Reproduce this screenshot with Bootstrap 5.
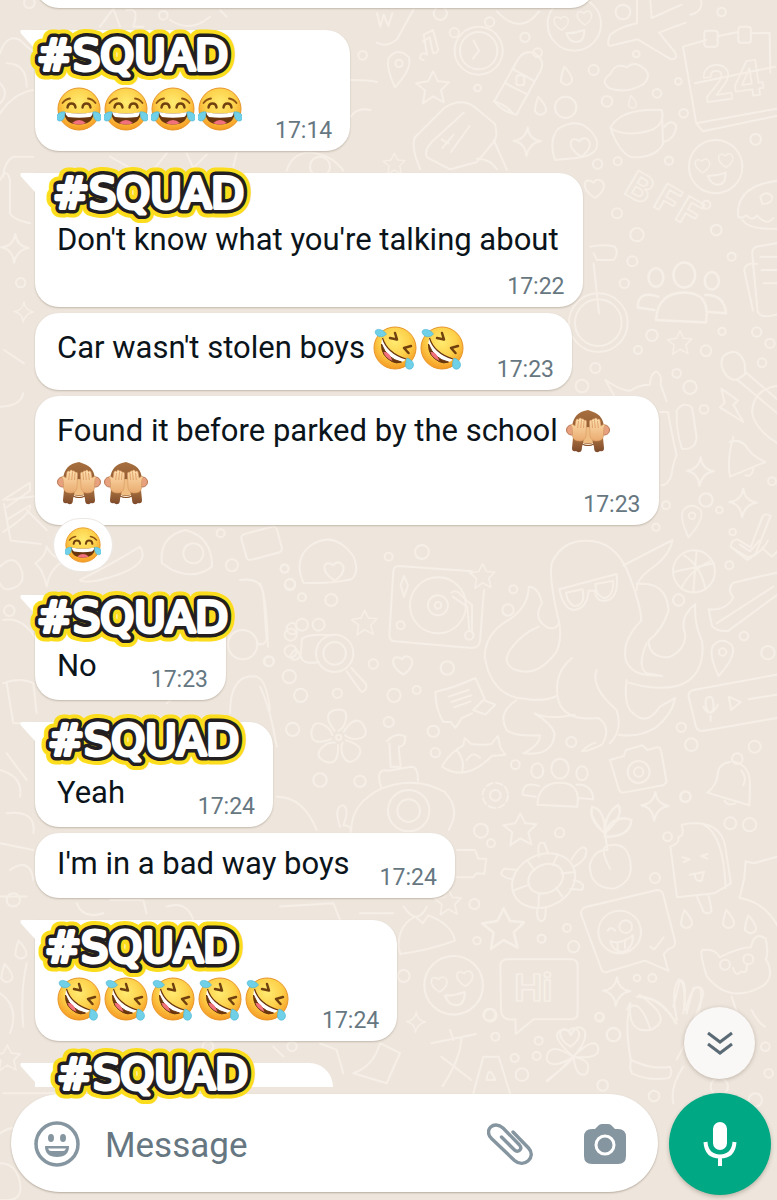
<!DOCTYPE html>
<html lang="en">
<head>
<meta charset="utf-8">
<meta name="viewport" content="width=device-width, initial-scale=1">
<title>Group chat</title>
<link href="https://cdn.jsdelivr.net/npm/bootstrap@5.3.0/dist/css/bootstrap.min.css" rel="stylesheet">
<style>
body{background:#eee6dd;font-family:Roboto,"Noto Sans",sans-serif;color:#0b141a}
.wallpaper{z-index:0;fill:none;stroke:#f6efe7;stroke-width:6;stroke-linecap:round;stroke-linejoin:round}
.wallpaper text{font-family:Inter,sans-serif;font-weight:700;stroke-width:5}
.chat{z-index:2;padding-left:35px;padding-right:35px}
.bubble{background:#fff;border-radius:24px;padding:9px 18px 6px 22px;box-shadow:0 1px 2px rgba(80,60,40,.28);margin-bottom:6px;max-width:100%}
.bubble.tailed{border-top-left-radius:0}
.group-end{margin-bottom:22px}
.has-reaction{margin-bottom:70px}
.bubble-past{width:560px;height:60px;margin-top:-52px}
.bubble-next{width:298px;height:24px;border-radius:0 24px 0 0;margin-bottom:7px;box-shadow:none}
.tail{left:-15px;top:0;width:18px;height:22px;fill:#fff}
.sender{height:42px}
.sender-tight{height:36px}
.sender-short{height:40px;min-width:151px}
.sender-long{height:40px;min-width:198px}
.words{font-size:31px;line-height:40px;padding-top:2px;margin-bottom:8px}
.words-emoji{line-height:52px;padding-top:0;margin-bottom:10px}
.sender+.beside{padding-top:2px}
.words-above{padding-right:6px;margin-bottom:12px}
.stamp{font-size:23px;line-height:29px;color:#667781}
.beside{column-gap:33px}
.beside-plain{column-gap:30px}
.overlap{display:grid}
.overlap>*{grid-area:1/1}
.overlap .words{padding-right:31px}
.emoji{width:44px;height:44px;margin-right:3px;vertical-align:middle;margin-top:-4px}
.emoji:last-child{margin-right:0}
.reaction{left:18px;bottom:-47px;width:60px;height:54px;border-radius:27px;background:#fff;border:1px solid #ece7e2}
.reaction .emoji{width:36px;height:36px;margin:0}
.sticker{width:206px;height:52px;left:var(--x);top:var(--y);overflow:visible;stroke-linejoin:round;stroke-linecap:round}
.sticker text,#squad{font-family:"DejaVu Sans",sans-serif;font-size:43px}
.composer{z-index:1;padding:0 6px 8px 11px;gap:11px}
.entry{height:98px;border-radius:49px;background:#fff;box-shadow:0 1px 2px rgba(80,60,40,.35);padding:2px 31px 0 22px}
.entry input{font-size:35px;color:#0b141a;padding:4px 0 0 24px;line-height:48px}
.entry input::placeholder{color:#667781;opacity:1}
.entry button{color:#8696a0}
.mic{width:102px;height:102px;margin:-1px 0 -3px;background:#00a884;box-shadow:0 2px 4px rgba(80,60,40,.3)}
.jump{width:71px;height:72px;right:22px;bottom:121px;background:#faf8f7;color:#5b6b75;box-shadow:0 1px 4px rgba(80,60,40,.3);z-index:3}
</style>
<script src="https://cdn.jsdelivr.net/npm/bootstrap@5.3.0/dist/js/bootstrap.bundle.min.js"></script>
</head>
<body>
<svg width="0" height="0" class="position-absolute" aria-hidden="true">
<defs>
<radialGradient id="skin" cx=".5" cy=".35" r=".65"><stop offset="0" stop-color="#ffeb70"/><stop offset=".55" stop-color="#fdd04a"/><stop offset="1" stop-color="#f59a23"/></radialGradient>
<linearGradient id="fur" x2="0" y2="1"><stop offset="0" stop-color="#a8703f"/><stop offset="1" stop-color="#7d492a"/></linearGradient>
<linearGradient id="hand" x2="0" y2="1"><stop offset="0" stop-color="#ffe0b0"/><stop offset="1" stop-color="#e9ab70"/></linearGradient>
<symbol id="joy" viewBox="0 0 44 44">
<circle cx="22" cy="22" r="21" fill="url(#skin)" stroke="#e89528"/>
<path d="M5.500 16q3-4 7.500-4.500M38.500 16q-3-4-7.500-4.500" fill="none" stroke="#8a5213" stroke-width="1.800" stroke-linecap="round"/>
<path d="M10.500 20.500q.5-4 4-4t4 4M25.500 20.500q.5-4 4-4t4 4" fill="none" stroke="#70410f" stroke-width="2.400" stroke-linecap="round"/>
<path d="M7 25q15 3 30 0-1 12.500-15 12.500T7 25z" fill="#69350e"/>
<path d="M8 25q14 3 28 0-1 4.500-3 5-11 1.500-22 0-2-1-3-5z" fill="#fff"/>
<path d="M15 36q7-6 14 0-7 3-14 0z" fill="#f0707c"/>
<path d="M8 25c-4-1-9 2-8.500 6 .5 4 6 4 7.500 0 .8-2 1-4 1-6zM36 25c4-1 9 2 8.500 6-.5 4-6 4-7.500 0-.8-2-1-4-1-6z" fill="#6fd0e8" stroke="#48b4d4" stroke-width=".6"/>
</symbol>
<symbol id="rofl" viewBox="0 0 44 44">
<circle cx="22" cy="22" r="21" fill="url(#skin)" stroke="#e89528"/>
<path d="M22 7l2 6.500-7-1.500M38 20l-7 2 4.500 5" fill="none" stroke="#70410f" stroke-width="2.500" stroke-linecap="round" stroke-linejoin="round"/>
<path d="M9.500 12Q14 27 33 33q-2 3-4.500 3Q14 33 8.500 18q0-4 1-6z" fill="#fff"/>
<path d="M8.500 18Q14 33 28.500 36q-5 2-9.500-.5Q8 30 8.500 18z" fill="#69350e" stroke="#69350e"/>
<path d="M10.500 26q6-1 9 9Q12 32 10.500 26z" fill="#f0707c"/>
<path d="M9.500 12Q14 27 33 33" fill="none" stroke="#69350e" stroke-width="1.200"/>
<path d="M2 6c1-5 9-2 11.500 2-3 4-10 4-11.500-2z" fill="#6fd0e8" stroke="#48b4d4" stroke-width=".6"/>
<path d="M34 32c4 1 8 5 6 9s-8 2-7.500-2c.2-3 .5-5 1.500-7z" fill="#6fd0e8" stroke="#48b4d4" stroke-width=".6"/>
</symbol>
<symbol id="monkey" viewBox="0 0 44 44">
<circle cx="5.500" cy="21" r="5" fill="#e7a17e" stroke="#b87550"/><circle cx="38.500" cy="21" r="5" fill="#e7a17e" stroke="#b87550"/>
<path d="M22 1l4 1.500C35 5 38 12 38 20q0 9-5 13-11 7-22 0-5-4-5-13C6 11 10 4 18 2z" fill="url(#fur)"/>
<ellipse cx="22" cy="27" rx="10" ry="9" fill="#f0bd83"/>
<path d="M14 32q8 5 16 0-1 5-8 5t-8-5z" fill="#84491f"/><path d="M15 33q7 4 14 0-2 3-7 3t-7-3z" fill="#fff0d8"/>
<path d="M7 29h11l-2 9q0 5-2.500 5-2 .5-3.500-1-4 1-4-3zM37 29H26l2 9q0 5 2.500 5 2 .5 3.500-1 4 1 4-3z" fill="url(#fur)"/>
<path d="M6 18q-2-2 0-3l3 2 1-6q1.500-2 2.500 0l.5-1.500q2-1.500 2.500.8 2-1.500 2.500 1 2.500-1 2.500 1.700l-.5 14q-1 5-6 5-7 0-7.500-5z" fill="url(#hand)" stroke="#d89b62" stroke-width=".6"/>
<path d="M38 18q2-2 0-3l-3 2-1-6q-1.500-2-2.500 0l-.5-1.500q-2-1.500-2.500.8-2-1.500-2.500 1-2.500-1-2.500 1.700l.5 14q1 5 6 5 7 0 7.500-5z" fill="url(#hand)" stroke="#d89b62" stroke-width=".6"/>
<path d="M12.500 12l-.8 7M15.500 11l-.8 8M18 12l-.5 7M31.500 12l.8 7M28.500 11l.8 8M26 12l.5 7" stroke="#d8995f" stroke-width=".8"/>
</symbol>
<symbol id="tail" viewBox="0 0 18 22"><path d="M2 0h16v22h-3V19L1 3.500Q-.5 0 2 0z"/></symbol>
<text id="squad" x="6" y="40">#SQUAD</text>
<path id="star" d="M0-16l5 10 11 1-8 8 3 12-11-6-10 7 2-13-9-7 12-2z" stroke-width="2"/>
<path id="spark" d="M0-42q4 36 40 42Q6 4-4 44-6 6-42-2-6-6 0-42z"/>
<path id="heart" d="M0 30C-50 0-30-38-4-16 12-42 54-6 0 30z"/>
<path id="drop" d="M-6-28Q26 8 14 20-2 34-16 16-16 0-6-28z"/>
<g id="love"><circle r="80"/><use href="#heart" transform="translate(-38 -4) scale(.75)"/><use href="#heart" transform="translate(32 -20) scale(.75)"/><path d="M-24 28q28 0 54-10 0 36-24 36-20 0-30-26z"/></g>
<g id="bell"><path d="M-20-56q-30 4-36 30Q-58 14-88 36L38 74Q40 40 40 10 40-46-6-56M-36 60q8 18 32 8"/><circle cx="2" cy="-66" r="16"/><path d="M14-30q18 20 6 44"/></g>
<g id="people"><ellipse cy="-60" rx="26" ry="30"/><path d="M-68 48Q-64-18 0-18T52 54zM-62-8q-50-16-50 26l40 6M50-12q46-2 50 44l-46-4"/><ellipse cx="-68" cy="-54" rx="18" ry="22"/><ellipse cx="66" cy="-46" rx="17" ry="21"/></g>
<g id="pin"><path d="M-14 58Q-46-10-30-34-4-62 26-34 42-4-14 58z"/><circle cx="-2" cy="-14" r="11"/></g>
</defs>
</svg>

<main class="position-relative d-flex flex-column min-vh-100 overflow-hidden">
<svg class="wallpaper position-absolute top-0 start-0 w-100 h-100" viewBox="0 0 777 1200" preserveAspectRatio="xMinYMin slice" aria-hidden="true">
<!-- upper right -->
<g transform="translate(377 0) scale(.3333)">
<path d="M0 40l10 40L20 44l14 34L46 40M110 28L60 118q-30 26-60 10M360 34q70 76 126 0M140 180q-16 0-8-16 10-8 18 0l-10-60 28-14 16 60q-14 20-18 0l-8-38-20 12"/>
<circle cx="305" cy="152" r="72"/><circle cx="305" cy="152" r="56"/><path d="M290 122l16 30-18 24"/><circle cx="232" cy="98" r="14"/><circle cx="338" cy="66" r="14"/>
<use href="#pin" x="68" y="204"/><use href="#star" transform="translate(168 262) scale(3)"/><use href="#star" transform="translate(52 492) scale(2)"/>
<path d="M352 304l72-128q20-28 50-16 30 20 18 50l-74 134q-40-8-66-40zM386 250l66 34M406 206l64 36M350 304q30 6 58 36"/><circle cx="482" cy="158" r="13"/><rect x="418" y="226" width="24" height="30" rx="8"/>
<use href="#love" x="592" y="72"/><use href="#love" x="1016" y="500"/>
<use href="#drop" x="568" y="228"/><use href="#drop" x="490" y="318"/><use href="#drop" x="766" y="306" transform="translate(230 92) scale(.7)"/>
<path d="M780 0v70q-50 10-80 34-16 40 6 32l76-18 100 60q24 0 10-24l-46-56 80-30M820 0l4 54 90-40M940 44q40-10 32-44M700 266q-34-20 0-44 16-36 50-20 20-20 46 0 32 20 4 50-50 30-100 14z"/>
<path d="M700 384q30-60 154-54 12 40-30 60-80 24-124-6zM700 384q30 80 66 88 70 2 92-40l-2-70M862 380q20-24 36-4-2 40-38 50"/>
<path d="M130 508q-30-70-16-96l90-90q50-30 90 0l60 50q10 40-4 54l-50 60-80 22-70-36q-10-20 14-46l96-88M350 420l40 90M196 444l34-40M222 456l56-78M214 430l-20-12M300 476q40 0 60 32"/>
<circle cx="566" cy="322" r="32"/><path d="M534 480q-20-60 10-94 70-44 114 30 16 50-60 58z"/><use href="#heart" x="612" y="440"/><use href="#spark" x="452" y="424"/>
<path d="M918 140l70-20M1024 108l60-12M1128 100l50-2 2 120M918 140l40 230 240-44M958 370l20 24 220-46M954 250l240-50"/><rect x="982" y="92" width="40" height="48" rx="8"/><rect x="1084" y="80" width="38" height="48" rx="8"/>
<text x="975" y="296" font-size="145" transform="rotate(-8 1060 240)">24</text>
<g font-size="112" transform="rotate(30 800 580)"><text x="745" y="610">B</text><text x="840" y="600">F</text><text x="915" y="600">F</text></g>
<use href="#heart" x="654" y="564"/>
<path d="M1084 650q-10-90 116-108M1084 650q10 8 24-4 20 20 32 0 30 34 50 8M1096 660q20 30 104 26M1150 590q20-20 36 0 0 22-30 22z"/>
<path d="M640 740q40-8 74 0 12 20-4 40h-50l-10-20M650 790l16 150"/><circle cx="664" cy="968" r="88"/><circle cx="664" cy="968" r="70"/>
<use href="#people" transform="translate(922 900) scale(1.250)"/><path d="M1198 730l-60 10q-14 6-12 24l16 170q10 24 56 10M1150 770h50M1154 810h46M1160 850h40M1140 792q-36-6-38 20l26 120"/>
<circle cx="190" cy="40" r="20"/><circle cx="444" cy="112" r="14"/><circle cx="738" cy="36" r="22"/><circle cx="1034" cy="36" r="13"/><circle cx="650" cy="210" r="15"/><circle cx="690" cy="304" r="16"/><circle cx="840" cy="280" r="13"/><circle cx="920" cy="340" r="13"/><circle cx="662" cy="492" r="14"/><circle cx="722" cy="484" r="12"/><circle cx="876" cy="482" r="12"/><circle cx="1136" cy="418" r="16"/><circle cx="720" cy="640" r="15"/><circle cx="780" cy="704" r="20"/><circle cx="988" cy="614" r="12"/><circle cx="1018" cy="690" r="16"/><circle cx="766" cy="784" r="15"/><circle cx="742" cy="850" r="14"/><circle cx="302" cy="264" r="10"/><circle cx="778" cy="162" r="10"/><circle cx="904" cy="244" r="10"/><circle cx="1064" cy="770" r="12"/>
</g>
<!-- middle right -->
<g transform="translate(560 280) scale(.3333)">
<use href="#star" transform="translate(360 188) scale(2.200)"/>
<path d="M486 262q-8-38 28-46 26-4 40 34l2 32-26 18q-30 0-44-38zM530 298l120 100M556 276l94 80M650 318q-70 10-74 80 10 50 74 90M484 326l50 36-14 12 30 52-70-44 14-14z"/>
<path d="M136 300q60 40 80 30 20-16 54-16 0-30 18-40 20 10 14 40l18 50M136 300l26 46M300 396h24q10 60 26 130-10 20-16 60-10 30-30 30M350 392q20-30 46-10l14 90q-4 40-44 34-18-50-16-114z"/>
<path d="M520 470q-20 70-10 120l106-44q-40-16-60-50-20-20-46-10M556 586q20 6 24-20"/><use href="#spark" x="422" y="574"/><use href="#spark" x="550" y="668"/><use href="#pin" transform="translate(398 720) scale(.900)"/>
<path d="M512 800l50 40 24-16 46-116q-20-12-26 6l-34 88-40-24q-20 4-20 22M606 804l30 26 20-20"/>
<circle cx="106" cy="264" r="15"/><circle cx="66" cy="318" r="19"/><circle cx="276" cy="166" r="17"/><circle cx="234" cy="210" r="12"/><circle cx="350" cy="280" r="13"/><circle cx="390" cy="322" r="20"/><circle cx="438" cy="212" r="16"/><circle cx="486" cy="154" r="11"/><circle cx="590" cy="156" r="14"/><circle cx="630" cy="190" r="14"/><circle cx="606" cy="248" r="13"/><circle cx="432" cy="388" r="13"/><circle cx="438" cy="660" r="20"/><circle cx="318" cy="676" r="12"/><circle cx="288" cy="742" r="11"/><circle cx="478" cy="690" r="10"/><circle cx="636" cy="604" r="12"/><circle cx="518" cy="756" r="10"/><circle cx="508" cy="856" r="12"/>
</g>
<!-- octopus, turntable and neighbours -->
<g transform="translate(260 540) scale(.3333)">
<path d="M130 128q-30-70 20-110 70-50 130 30 20 50-6 70-60 14-144 10z"/><use href="#heart" x="224" y="92"/>
<path d="M416 78q-14 0-16 16l-12 190q0 18 16 20l230 20q22 0 26-20l12-154M416 78l220 16"/><circle cx="534" cy="196" r="84"/><circle cx="534" cy="196" r="30"/><circle cx="534" cy="196" r="10"/><use href="#star" transform="translate(668 108) scale(2.300)"/><path d="M574 158q10-8 22 0l40 38v80M578 170l44 30 6 70M432 108l12 28-12 34-10-34z"/><circle cx="628" cy="286" r="13"/><circle cx="422" cy="256" r="12"/>
<path d="M898 250Q860 90 880 60 910 0 982 2q80 0 120 90 40 100 42 150-60 60-46 120 20 50 100 44M898 250q10 70-20 100-50 60-110 40-50-20-10-70 30-40 78-60M806 140q30 0 40 50-30 50 20 74 24 4 30-14M806 140q0 60-60 100-70 40-72 110 20 120 120 126 60 10 96-8M936 354q-60 50-40 130 20 60 120 50 40 30 10 80-40 20-60 20 20-20 40-26M1010 390q-20 50 60 120 20 60-20 100M770 480q-60 40-30 90 20 20 100 16 0 30-50 54 90 10 94-60-10-30-60-60 40 20 120 4M1100 420q-10 80 20 100 40 40 80-20l46-26q-10 50-60 90-50 30-110 20M1130 132q90-10 96 80-20 60-60 90 0 50 60 50 50-20 50-70-20-50 30-90-4 60 20 110 10 80-40 120-60 40-180 6M1160 310q-30 70 0 90l46 8M1090 76l148-76q-10 50-70 90-40 30-38 60"/>
<path d="M898 148l172-46q6 60-20 76-40 16-46-26h-18q-4 54-44 58-30 0-44-62zM918 158l50-10q10 50-26 50-20-10-24-40zM1006 132l54-10q0 50-28 52-24-6-26-42z"/>
<circle cx="1302" cy="94" r="63"/><path d="M1240 96l122-26M1272 46q50 30 64 100M1264 146q20-50 86-82M1310 32l-10 124"/>
<path d="M1550 98l-130 30q-20 20 0 44-20 40-74 36l10 50q20 20 50 14l144-106M1370 250l170-110M1414 22l50 30q40-10 60-50M1440 14l30 20 30-34"/>
<use href="#pin" transform="translate(1390 350)"/><path d="M1550 404l-250 46q-16 4-14 20l22 90q6 16 24 12l218-38M1338 476q20-16 22 14 4 30-14 26-12-14-8-40zM1330 500q20 40 44-6M1352 528v14M1406 470l36 16-28 24zM1466 478l84-14"/>
<circle cx="92" cy="284" r="18"/><circle cx="92" cy="334" r="18"/><circle cx="126" cy="254" r="18"/><circle cx="176" cy="254" r="18"/><path d="M176 366q-50 10-54-20l4-50q20-16 90-10"/><circle cx="224" cy="340" r="56"/><circle cx="224" cy="340" r="34"/><path d="M260 394l44 62q20-6 14-24l-44-48"/><use href="#star" transform="translate(314 248) scale(2.300)"/><use href="#heart" x="430" y="374"/>
<path d="M526 456q60-14 120-42l28 62M526 456q0 50 24 90l22 0 14 18 20-30 30-14M566 470l60-20M574 486l60-20M582 502l50-18M640 510l30-30 36 14-30 30z"/>
<g transform="translate(236 592)"><path id="petal" d="M-12-20q-40-50 0-62 40-8 34 28-4 24-22 34"/><use href="#petal" transform="rotate(72)"/><use href="#petal" transform="rotate(144)"/><use href="#petal" transform="rotate(216)"/><use href="#petal" transform="rotate(288)"/><circle r="8"/></g>
<path d="M546 680q20-40 64-64l4-22 20 18q40 4 60 0l20-24 8 36 14 20-40 4q-80 80-150 32zM590 630q26 30 16 66M620 660q20-30 40-6"/>
<path d="M380 604q30-30 56-14 0 30-20 30l6 60h-30l-4-70M364 744q-20-60 20-52l70-12q20 0 20 42M274 870q0-80 90-124 100-40 190 10 50 50 12 114"/><circle cx="446" cy="812" r="62"/><circle cx="446" cy="812" r="34"/><circle cx="706" cy="766" r="16"/><circle cx="706" cy="766" r="38" stroke-dasharray="20 10"/>
<use href="#people" x="900" y="746"/><path d="M1050 660l42-12 6-18 50-14 14 14 30-8q10 0 12 14l16 90-10 10-120 22q-10 0-14-12z"/><circle cx="1136" cy="696" r="33"/><circle cx="1136" cy="696" r="14"/><use href="#bell" x="1430" y="722"/><use href="#spark" x="1186" y="798"/><path d="M1034 880q-50-40-38-80 40 10 38 80 0-60 40-84 20 30-40 84 40-60 80-40 0 50-80 50z"/>
<path d="M0 440q30 60 50 180M0 130q20 40 24 190M50 770q80 0 120 100M240 860q-20-60 10-64 20 10 0 60 30 0 20 30"/>
<circle cx="486" cy="36" r="21"/><circle cx="386" cy="50" r="12"/><circle cx="74" cy="86" r="12"/><circle cx="90" cy="134" r="16"/><circle cx="214" cy="180" r="18"/><circle cx="126" cy="172" r="12"/><circle cx="340" cy="372" r="14"/><circle cx="562" cy="384" r="20"/><circle cx="402" cy="466" r="20"/><circle cx="122" cy="466" r="20"/><circle cx="232" cy="460" r="14"/><circle cx="98" cy="568" r="20"/><circle cx="386" cy="546" r="15"/><circle cx="520" cy="574" r="17"/><circle cx="526" cy="638" r="14"/><circle cx="180" cy="720" r="20"/><circle cx="300" cy="724" r="17"/><circle cx="744" cy="210" r="17"/><circle cx="1256" cy="180" r="17"/><circle cx="934" cy="606" r="15"/><circle cx="1294" cy="614" r="19"/><circle cx="1484" cy="620" r="18"/><circle cx="1264" cy="562" r="14"/><circle cx="1276" cy="770" r="16"/><circle cx="1524" cy="338" r="20"/><circle cx="1452" cy="288" r="13"/><circle cx="760" cy="148" r="12"/><circle cx="766" cy="674" r="13"/><circle cx="28" cy="364" r="14"/><circle cx="470" cy="450" r="12"/>
</g>
<!-- lower right -->
<g transform="translate(377 780) scale(.3333)">
<use href="#star" transform="translate(430 148) scale(3)"/><use href="#star" transform="translate(380 446) scale(3.800)"/><use href="#star" transform="translate(214 366) scale(2.400)"/>
<ellipse cx="506" cy="296" rx="54" ry="42" transform="rotate(-25 506 296)"/><ellipse cx="500" cy="302" rx="98" ry="78" transform="rotate(-25 500 302)"/><path d="M406 298q-50-10-24-32l38 4M486 230q-8-50 16-40l12 30M584 238q30-50 44-30 4 30-34 50M590 300q40 10 24 30l-34-4M506 384q2 40-14 40-16-10-10-40M542 224l-14 30M594 276l-40 4M556 350l-18-26M484 384l2-42M414 330l36-14M450 240l22 30"/>
<path d="M700 266q-40-70 0-70 50-10 60 50 10 60-50 80-70 0-72-70 14-50 54-46-10-50-8-90M684 160q-50-50-38-80 40 10 38 80 0-60 40-86 20 30-40 86 20-60 80-40-10 50-70 50"/>
<path d="M880 200q30-10 24-30 20 0 10-36 110-20 130 60l18 116-50 30-112 12q-10-80-20-152zM980 134q60 30 66 190M960 350l20 46q20 10 24-6l-10-46M916 232l22 6-18 8M992 222l-20 6 20 8M938 284l44-8M954 286q2 20 20 16l6-24"/>
<path d="M630 380l210-50q14 0 18 12l36 140q4 20-18 24l-16 16 14 50-70-30-114 34q-14 4-18-12L612 402q-2-16 18-22z"/><circle cx="728" cy="456" r="64"/><circle cx="746" cy="440" r="19"/><path d="M692 452q10-16 22 0M700 484q36 10 68-18 0 40-30 50-30 0-38-32zM722 488v22M744 480v24M820 500l12 8 28-36"/>
<path d="M64 500l6 22q90-12 164-40-10-50-80-76l-16 24-22-20q-50 20-52 90z"/><use href="#love" transform="translate(230 616) scale(1.100)"/>
<path d="M392 538h190q20 0 20 20v140q0 20-20 20H470l-54 44v-44q-44 6-44-30l-2-130q0-20 22-20z"/><text x="412" y="664" font-size="112">Hi</text>
<use href="#spark" x="720" y="634"/><use href="#spark" transform="translate(118 726) scale(.7)"/>
<path d="M990 590q-30-90-6-80 30-4 44 22 60-30 94-30 10-50 44-26 10 50 0 60 30 50-6 80-100 60-170-26zM1068 564q10 30 24 10 20 10 18-20"/><circle cx="1044" cy="554" r="15"/><circle cx="1114" cy="538" r="15"/>
<path d="M1200 230l-70 20-24-6-4 50-14 60q70 10 112 80M1064 650q20 60 30 90M1124 690q20 40 40 50M750 690l10-20q-10 90 60 80 50-20 20-60-60-60-54-40 70 0 110 80M900 720q-20-90 6-122 20 10 16 80M926 690q20-80 44-66 10 50-20 110M80 380q40 60 70 0M240 210h54l10 26 24 0-6 46-24-2-10 12h-50"/>
<use href="#drop" x="928" y="418"/><use href="#drop" x="1054" y="418"/><use href="#drop" x="1120" y="434"/><use href="#heart" x="580" y="770"/>
<circle cx="312" cy="152" r="21"/><circle cx="548" cy="158" r="14"/><circle cx="926" cy="50" r="15"/><circle cx="1060" cy="130" r="18"/><circle cx="1118" cy="134" r="20"/><circle cx="872" cy="170" r="13"/><circle cx="834" cy="294" r="15"/><circle cx="292" cy="372" r="15"/><circle cx="590" cy="500" r="17"/><circle cx="494" cy="476" r="12"/><circle cx="570" cy="444" r="12"/><circle cx="80" cy="588" r="18"/><circle cx="340" cy="706" r="19"/><circle cx="668" cy="712" r="13"/><circle cx="710" cy="764" r="20"/><circle cx="826" cy="594" r="12"/><circle cx="342" cy="190" r="12"/><circle cx="300" cy="482" r="11"/><circle cx="780" cy="594" r="10"/>
</g>
<!-- above the message box -->
<g transform="translate(420 960) scale(.3333)">
<path d="M34 250l134-28M90 210l10 30M124 232q0 60-56 146M64 290l90 70M160 400l30-110h46l34 110M200 360q6-50 26 0z"/>
<path d="M460 290q-70-60-40-78 26-10 32 14 20-40 42-14 10 30-34 78 60-60 74-30 10 40-74 30 60 10 40 50-30 20-40-50-90 90-78 70 80-60 78-70-60 40-80 10 0-60 80-10z"/>
<path d="M632 300q-20-120 0-160 30-20 60 70M650 110q70 0 120 80M760 140l20-80q24 0 10 100M800 160l20-76q30-10 30 20l-50 140-30 54M634 300q60 30 116 20 10 20-4 34-60 10-110-14-10-20-2-40zM790 320q-40 60-30 110"/>
<circle cx="208" cy="164" r="18"/><circle cx="226" cy="230" r="12"/><circle cx="356" cy="242" r="12"/><circle cx="350" cy="288" r="12"/><circle cx="284" cy="294" r="12"/><circle cx="306" cy="344" r="19"/><circle cx="580" cy="224" r="20"/><circle cx="538" cy="170" r="12"/><circle cx="548" cy="376" r="16"/><circle cx="702" cy="408" r="16"/><circle cx="898" cy="380" r="26"/><circle cx="1036" cy="260" r="13"/><circle cx="1006" cy="420" r="20"/><circle cx="1046" cy="340" r="13"/>
</g>
<!-- left edge and the gaps between messages -->
<g transform="scale(.3333)">
<circle cx="88" cy="8" r="16"/><circle cx="490" cy="46" r="13"/><path d="M300 80l40-54 20 54M380 30q40-10 20 50h30M510 60q60 40 120-10M660 30l20 20M0 160q20-60 60-40 60 60 100 60M20 190q60 0 60 70"/><path d="M0 540q20-40 30 0v100q10 20 60 30M0 250q30 30 0 60M0 340q40-60 100-70M100 470l-60 0q-30 20-30 60"/><use href="#spark" x="46" y="744"/><circle cx="62" cy="848" r="14"/><use href="#spark" transform="translate(72 936) scale(.7)"/><circle cx="1088" cy="166" r="13"/><path d="M1052 240q60 0 80 6M1052 350q20-30 60-20M330 470l60 34M460 510l40-50M560 460l20 44 40-40M700 500l10-40M860 512q20-60 80-54 60 10 90 54"/><circle cx="960" cy="500" r="30"/>
<path d="M12 1050l60 40M0 1220q60 0 70-40M20 1560l70-44q10 20-80 80M10 1500l80-52v24l-70 50"/>
<path d="M20 1500l150-20M12 1512l20 110 90 10M80 1530l60 60M0 1700q40-40 60 0 20 40-10 60-40 20-50-10M106 1690q30-20 34-50 20 40 60 40-50 20-60 80-10-50-34-70zM240 1740q100-50 180-100 40 60-120 100-50 10-60-0M486 1690q-10-80 70-100 80 20 80 110-50 40-120 10z"/><circle cx="580" cy="1660" r="30"/><rect x="730" y="1590" width="110" height="80" rx="12" transform="rotate(-15 785 1630)"/><circle cx="696" cy="1696" r="18"/><circle cx="870" cy="1752" r="15"/><circle cx="854" cy="1706" r="12"/><circle cx="662" cy="1600" r="12"/><circle cx="28" cy="1832" r="16"/><path d="M10 1860q60-10 100 60M720 1740q60-10 70 40l10 140q-10 20-30 10M10 2050q50-20 90 0l10 90M20 2050l20 120h50M500 2110q30-30 70-10M690 2140q0-120 80-110 30 10 40 100"/><circle cx="728" cy="1934" r="44"/><circle cx="806" cy="1984" r="15"/><circle cx="868" cy="2030" r="20"/><path d="M860 1880q30-30 30 20-30 10-30-20zM870 1970q20-40 30 0-16 20-30 0zM20 2260l60 80M0 2310q70 20 60 80M20 2440q90-10 80 60M0 2530l100 20M30 2610q60-40 70 30M0 2690h80"/>
<use href="#drop" x="62" y="2850"/><use href="#drop" x="20" y="2920"/><use href="#star" transform="translate(22 3174) scale(2.400)"/><path d="M0 2980q60 40 30 120M80 2890q-20 90-10 190M0 3400q60-40 100 20M10 3280h200l-30 60M0 3490q50 0 60 60t-60 50"/><circle cx="40" cy="2700" r="20"/><path d="M230 2710q20 50 80 30M330 2700h100l10 40M500 2720q60-20 80 40M840 2720l160-10 20 50M1080 2740h100"/>
<path d="M440 3150l80 30 30-30M820 3140l30 30M960 3130l50 20 20 70M1060 3220q60-20 80-90l60 30-40 90z"/><circle cx="876" cy="3140" r="14"/><circle cx="624" cy="3140" r="16"/>
</g>
</svg>

<section class="chat position-relative d-flex flex-column align-items-start" aria-label="Messages">
<div class="bubble bubble-past group-end"></div>

<article class="bubble tailed position-relative group-end">
<svg class="tail position-absolute"><use href="#tail"/></svg>
<div class="sender"></div>
<div class="beside d-flex align-items-end"><p class="words words-emoji text-nowrap"><svg class="emoji" role="img" aria-label="😂"><use href="#joy"/></svg><svg class="emoji" role="img" aria-label="😂"><use href="#joy"/></svg><svg class="emoji" role="img" aria-label="😂"><use href="#joy"/></svg><svg class="emoji" role="img" aria-label="😂"><use href="#joy"/></svg></p><time class="stamp">17:14</time></div>
<svg class="sticker position-absolute" style="--x:-4px;--y:0px" viewBox="0 0 206 52"><use href="#squad" fill="#fbdd1e" stroke="#fbdd1e" stroke-width="19"/><use href="#squad" fill="#231f20" stroke="#231f20" stroke-width="11"/><text x="6" y="40" fill="#fff" stroke="#fff" stroke-width="4">#SQUAD</text></svg>
</article>

<article class="bubble tailed position-relative">
<svg class="tail position-absolute"><use href="#tail"/></svg>
<div class="sender sender-tight"></div>
<div class="d-flex flex-column"><p class="words words-above">Don't know what you're talking about</p><time class="stamp align-self-end">17:22</time></div>
<svg class="sticker position-absolute" style="--x:12px;--y:-5px" viewBox="0 0 206 52"><use href="#squad" fill="#fbdd1e" stroke="#fbdd1e" stroke-width="19"/><use href="#squad" fill="#231f20" stroke="#231f20" stroke-width="11"/><text x="6" y="40" fill="#fff" stroke="#fff" stroke-width="4">#SQUAD</text></svg>
</article>

<article class="bubble">
<div class="beside d-flex align-items-end"><p class="words words-emoji">Car wasn't stolen boys <svg class="emoji" role="img" aria-label="🤣"><use href="#rofl"/></svg><svg class="emoji" role="img" aria-label="🤣"><use href="#rofl"/></svg></p><time class="stamp">17:23</time></div>
</article>

<article class="bubble position-relative has-reaction">
<div class="overlap"><p class="words words-emoji">Found it before parked by the school <svg class="emoji me-0" role="img" aria-label="🙈"><use href="#monkey"/></svg><br><svg class="emoji" role="img" aria-label="🙈"><use href="#monkey"/></svg><svg class="emoji" role="img" aria-label="🙈"><use href="#monkey"/></svg></p><time class="stamp align-self-end ms-auto">17:23</time></div>
<button type="button" class="reaction position-absolute d-flex align-items-center justify-content-center p-0" aria-label="Reactions"><svg class="emoji"><use href="#joy"/></svg></button>
</article>

<article class="bubble tailed position-relative group-end">
<svg class="tail position-absolute"><use href="#tail"/></svg>
<div class="sender sender-short"></div>
<div class="d-flex align-items-end justify-content-between"><p class="words">No</p><time class="stamp">17:23</time></div>
<svg class="sticker position-absolute" style="--x:-4px;--y:-3px" viewBox="0 0 206 52"><use href="#squad" fill="#fbdd1e" stroke="#fbdd1e" stroke-width="19"/><use href="#squad" fill="#231f20" stroke="#231f20" stroke-width="11"/><text x="6" y="40" fill="#fff" stroke="#fff" stroke-width="4">#SQUAD</text></svg>
</article>

<article class="bubble tailed position-relative">
<svg class="tail position-absolute"><use href="#tail"/></svg>
<div class="sender sender-long"></div>
<div class="d-flex align-items-end justify-content-between"><p class="words">Yeah</p><time class="stamp">17:24</time></div>
<svg class="sticker position-absolute" style="--x:7px;--y:-7px" viewBox="0 0 206 52"><use href="#squad" fill="#fbdd1e" stroke="#fbdd1e" stroke-width="19"/><use href="#squad" fill="#231f20" stroke="#231f20" stroke-width="11"/><text x="6" y="40" fill="#fff" stroke="#fff" stroke-width="4">#SQUAD</text></svg>
</article>

<article class="bubble group-end">
<div class="beside beside-plain d-flex align-items-end"><p class="words">I'm in a bad way boys</p><time class="stamp">17:24</time></div>
</article>

<article class="bubble tailed position-relative group-end">
<svg class="tail position-absolute"><use href="#tail"/></svg>
<div class="sender"></div>
<div class="beside d-flex align-items-end"><p class="words words-emoji text-nowrap"><svg class="emoji" role="img" aria-label="🤣"><use href="#rofl"/></svg><svg class="emoji" role="img" aria-label="🤣"><use href="#rofl"/></svg><svg class="emoji" role="img" aria-label="🤣"><use href="#rofl"/></svg><svg class="emoji" role="img" aria-label="🤣"><use href="#rofl"/></svg><svg class="emoji" role="img" aria-label="🤣"><use href="#rofl"/></svg></p><time class="stamp">17:24</time></div>
<svg class="sticker position-absolute" style="--x:4px;--y:2px" viewBox="0 0 206 52"><use href="#squad" fill="#fbdd1e" stroke="#fbdd1e" stroke-width="19"/><use href="#squad" fill="#231f20" stroke="#231f20" stroke-width="11"/><text x="6" y="40" fill="#fff" stroke="#fff" stroke-width="4">#SQUAD</text></svg>
</article>

<article class="bubble bubble-next tailed position-relative">
<svg class="tail position-absolute"><use href="#tail"/></svg>
<svg class="sticker position-absolute" style="--x:16px;--y:-14px" viewBox="0 0 206 52"><use href="#squad" fill="#fbdd1e" stroke="#fbdd1e" stroke-width="19"/><use href="#squad" fill="#231f20" stroke="#231f20" stroke-width="11"/><text x="6" y="40" fill="#fff" stroke="#fff" stroke-width="4">#SQUAD</text></svg>
</article>
</section>

<button type="button" class="jump position-absolute border-0 rounded-circle p-0 d-flex align-items-center justify-content-center" aria-label="Scroll to latest"><svg width="28" height="26" viewBox="0 0 28 26" fill="none" stroke="currentColor" stroke-width="3"><path d="M2 3l12 9 12-9M2 14l12 9 12-9"/></svg></button>

<form class="composer position-relative d-flex align-items-start mt-auto">
<div class="entry d-flex align-items-center flex-grow-1">
<button type="button" class="btn border-0 p-0 d-flex" aria-label="Emoji"><svg width="48" height="48" viewBox="0 0 48 48"><circle cx="24" cy="24" r="21" fill="none" stroke="currentColor" stroke-width="3.500"/><ellipse cx="18" cy="18" rx="3" ry="4" fill="currentColor"/><ellipse cx="30" cy="18" rx="3" ry="4" fill="currentColor"/><path d="M12 26h24q0 11-12 11T12 26z" fill="currentColor"/><path d="M15 28.500h18q-1 2.500-3 2.500H18q-2 0-3-2.500z" fill="#fff"/></svg></button>
<input type="text" class="form-control border-0 shadow-none bg-transparent" placeholder="Message" aria-label="Message">
<button type="button" class="btn border-0 p-0 d-flex me-5" aria-label="Attach"><svg width="48" height="44" viewBox="0 0 48 44" fill="none" stroke="currentColor" stroke-width="3.400" stroke-linecap="round"><path d="M14.500 15l13 13c3.500 3.500 8.500-1 5-5L16 6C7-2-4 8 4.500 16.500l23 22C37 47 50 35 41.500 26L26 10"/></svg></button>
<button type="button" class="btn border-0 p-0 d-flex" aria-label="Camera"><svg width="44" height="44" viewBox="0 0 44 44"><path d="M9 7h3l4-4q1.500-1 3-1h6q2 0 3 1l4 4h3q8 0 8 8v19q0 8-8 8H9q-8 0-8-8V15q0-8 8-8z" fill="currentColor"/><circle cx="22" cy="23" r="9" fill="none" stroke="#fff" stroke-width="3"/></svg></button>
</div>
<button type="button" class="mic border-0 rounded-circle p-0 flex-shrink-0 d-flex align-items-center justify-content-center" aria-label="Record voice message"><svg width="34" height="46" viewBox="0 0 34 46" fill="none" stroke="#fff" stroke-width="4"><rect x="10" y="1" width="14" height="28" rx="7" fill="#fff" stroke="none"/><path d="M2.500 21q1 14.500 14.500 14.500T31.500 21M17 35v10"/></svg></button>
</form>
</main>
</body>
</html>
